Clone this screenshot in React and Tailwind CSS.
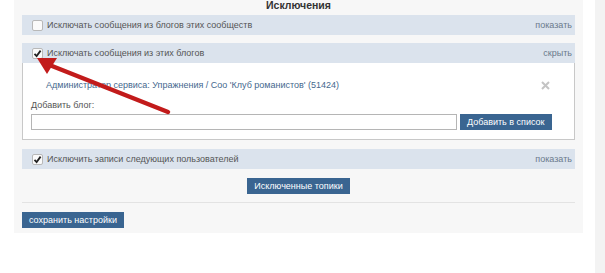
import React from 'react';

const font = { fontFamily: '"Liberation Sans", Arial, sans-serif' };

const Check = ({ checked }) => (
  <span className="w-[11px] h-[11px] border border-[#b8b8b8] rounded-[2px] bg-[#fafafa] flex items-center justify-center shrink-0">
    {checked && (
      <svg width="9" height="9" viewBox="0 0 9 9">
        <path d="M1.5 4.8 L3.6 7 L7.6 1.6" fill="none" stroke="#222" strokeWidth="1.8" />
      </svg>
    )}
  </span>
);

const SectionHead = ({ checked, label, action }) => (
  <div className="h-[20px] bg-[#dbe3ed] flex items-center pl-[10px] pr-[3px]">
    <Check checked={checked} />
    <span className="ml-[4px] text-[#555] flex-1">{label}</span>
    <span className="text-[#6a7a8c]">{action}</span>
  </div>
);

const Button = ({ children, className = '' }) => (
  <button className={`h-[16px] px-[7px] bg-[#3a6591] text-white text-[9px] leading-[16px] whitespace-nowrap ${className}`}>
    {children}
  </button>
);

export default function App() {
  return (
    <div className="relative w-[605px] h-[273px] bg-white flex text-[9px] leading-[11px] overflow-hidden" style={font}>
      <div className="ml-[14px] w-[569px] h-[233px] bg-[#f7f7f7] px-[8px] flex flex-col">
        <div className="h-[15px] text-center font-bold text-[10.5px] leading-[10px] text-[#333]">Исключения</div>

        <SectionHead checked={false} label="Исключать сообщения из блогов этих сообществ" action="показать" />

        <div className="h-[8px]" />
        <SectionHead checked label="Исключать сообщения из этих блогов" action="скрыть" />

        <div className="h-[77px] bg-white border border-[#c8c8c8] border-t-0 px-[8px] flex flex-col">
          <div className="flex items-center mt-[17px] pl-[15px] pr-[16px]">
            <span className="flex-1 text-[#45688e]">
              Администратор сервиса: Упражнения / Соо 'Клуб романистов' (51424)
            </span>
            <svg width="9" height="9" viewBox="0 0 9 9">
              <path d="M1 1 L8 8 M8 1 L1 8" stroke="#c4c4c4" strokeWidth="2" />
            </svg>
          </div>
          <div className="mt-[9px] text-[#555]">Добавить блог:</div>
          <div className="flex items-center mt-[3px]">
            <div className="w-[426px] h-[16px] border border-[#b5b5b5] bg-white" />
            <Button className="ml-[3px]">Добавить в список</Button>
          </div>
        </div>

        <div className="h-[9px]" />
        <SectionHead checked label="Исключить записи следующих пользователей" action="показать" />

        <div className="flex justify-center mt-[9px]">
          <Button>Исключенные топики</Button>
        </div>

        <div className="mt-[8px] border-t border-[#e3e3e3]" />

        <div className="mt-[9px]">
          <Button>сохранить настройки</Button>
        </div>
      </div>

      <div className="ml-[12px] w-[10px] h-full bg-[#f3f3f3]" />

      <svg className="absolute left-0 top-0 pointer-events-none" width="605" height="273">
        <line x1="168" y1="112" x2="52" y2="66" stroke="#c21b1b" strokeWidth="4.5" strokeLinecap="round" />
        <polygon points="37,58 57,58 47,74" fill="#c21b1b" />
      </svg>
    </div>
  );
}
